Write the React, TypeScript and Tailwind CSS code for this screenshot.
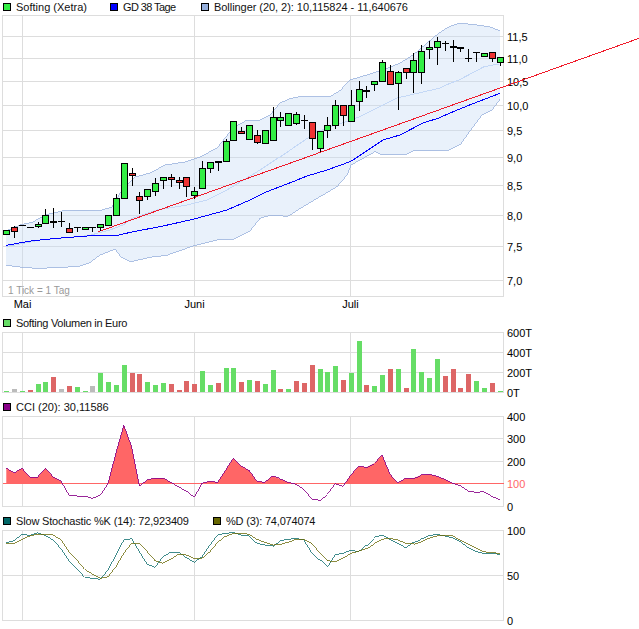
import React from "react";

// one entry per trading day: body top, body bottom, wick top, wick bottom, kind
// g = green, r = red, f = thin doji, k = thick doji
type Candle = [number, number, number, number, string];

const candles: Candle[] = [
  [230, 233.5, 229.5, 233.5, "g"], [226.5, 230.5, 226, 237.7, "r"], [225.5, 225.5, 225.5, 225.5, "f"], [227.5, 227.5, 227.5, 227.5, "f"],
  [223.5, 225.7, 222, 227.7, "g"], [215.3, 223.3, 209.3, 223.3, "g"], [221.7, 221.7, 208.3, 227.7, "k"], [221.3, 221.3, 212, 226.7, "f"],
  [227.7, 231.7, 223.3, 233, "r"], [227.3, 227.3, 227.3, 231.7, "f"], [227.3, 229.7, 227.3, 229.7, "g"], [227.3, 227.3, 227.3, 231.7, "f"],
  [224.3, 227.3, 224.3, 231.3, "g"], [215.3, 225.7, 215.3, 225.7, "g"], [198.3, 215.3, 194, 215.3, "g"], [163.3, 198.3, 163.3, 198.3, "g"],
  [173.3, 175.7, 168.3, 185.7, "r"], [196.3, 200.3, 192.3, 213.7, "r"], [189.3, 196.3, 189.3, 200, "g"], [183.3, 191.3, 178.3, 195.7, "g"],
  [177.3, 180.3, 177.3, 188.7, "g"], [177.3, 179.3, 174, 186.7, "r"], [180.3, 182.3, 177.3, 188.7, "r"], [177.3, 186.3, 177.3, 196.7, "r"],
  [191.3, 195.3, 187.3, 199.3, "g"], [168.3, 188.3, 161, 188.3, "g"], [162.3, 168.3, 162.3, 173.3, "g"], [162.3, 162.3, 161, 170.7, "k"],
  [141.3, 161.7, 139, 161.7, "g"], [121.3, 140.3, 121.3, 140.3, "g"], [131, 132.3, 126.7, 134, "r"], [125.3, 139.3, 125.3, 139.3, "g"],
  [135.3, 142.3, 130, 144, "r"], [130.3, 143.7, 130.3, 143.7, "g"], [117.3, 140.3, 107.3, 140.3, "g"], [117.3, 120.3, 112.3, 126.7, "g"],
  [113.3, 125.3, 113.3, 125.3, "g"], [114.3, 123.3, 112.3, 125.3, "g"], [120.3, 120.3, 115, 129.3, "f"], [122.3, 138.3, 122.3, 150, "r"],
  [131.3, 148.3, 131.3, 152, "g"], [125.3, 130.3, 117.3, 138, "g"], [105.3, 125.3, 100, 129, "g"], [105.3, 115.3, 105.3, 126, "r"],
  [105.3, 121.3, 90, 121.3, "g"], [89.3, 101.3, 81.3, 110.7, "g"], [90.7, 90.7, 86, 98, "k"], [81.3, 84.3, 81.3, 91, "g"],
  [62.3, 81.3, 60.3, 81.3, "g"], [71.3, 84.3, 65.3, 84.3, "r"], [72.3, 83.3, 71.3, 110, "g"], [68.3, 72.3, 68.3, 79.3, "r"],
  [60.3, 72.3, 53.3, 92.7, "g"], [50.7, 71.3, 45, 84, "g"], [47.3, 49.3, 41.3, 59.3, "g"], [41.3, 47.3, 36.7, 64.7, "g"],
  [43.3, 43.3, 40.7, 50.7, "f"], [46.7, 46.7, 40, 62.3, "k"], [48.3, 48.3, 48.3, 51.7, "k"], [58.3, 58.3, 49.3, 62.3, "f"],
  [52.7, 52.7, 52.7, 62.3, "f"], [52.7, 56, 52.7, 56, "g"], [52.3, 58.3, 51.5, 62.3, "r"], [57.3, 62.3, 57.3, 65.7, "g"],
];

const bollUpper = "6,231 20,225 33,222 45,215 63,210.7 80,210 100,210.7 112,207 122,190 135,177 150,173 165,165 185,162 200,157 217,148 233,128 247,120 260,120 270,115 280,103 290,98.7 300,96.7 317,96.7 330,96.7 340,90.7 350,80 383,70 400,63 413,55 427,43 439,33 449,26.7 459,23.3 472,24.3 489,26.7 500,30.7";
const bollLower = "500,99.3 492,110 482,115 472,128.3 460.7,144 449,150 439,150.7 413,151 406.7,154.3 381.7,155 375,151.7 351,165 347,175 337,186.7 320,196.7 303,206.7 288,216.3 270,215.3 260,218.3 250,231 247,232.3 233,239.3 217,240 193,246 166.7,255.3 150,257.3 130.7,261.7 120.7,256.7 115,249 100,255 90,262.7 80,266 60,267.7 35,268.3 20,267 6,265.3";
const bollMiddle = "6,246.7 40,240 88,235.7 110,230 123,225 133,218 156.7,210 186.7,205 206.7,200 227,190 260,170 275,160 283,155 317,131.7 360,116.7 397,98 439,88.3 450,83.3 459,80 484,66.7 499,64";
const gd38 = "6,245.3 33,240.7 56.7,238.3 87,236 118,235.3 133,231.7 160,226.7 193,219.3 227,210 250,200 267,191.7 293,181.7 307,176 327,170 350,161.7 353,160 383,140 400,135 423,123 439,118 450,113 472,104 500,93.3";

// top of each volume bar, read as y offset in the 3x crop (base = 307)
const volumes: [number, string][] = [
  [303, "g"], [297, "n"], [303, "g"], [300, "r"], [282, "g"], [276, "g"], [261, "r"], [297, "n"], [288, "r"], [291, "g"], [303, "g"], [288, "n"],
  [249, "g"], [276, "g"], [285, "g"], [225, "g"], [249, "r"], [252, "r"], [276, "g"], [285, "g"], [279, "g"], [282, "r"], [300, "r"], [273, "r"],
  [282, "r"], [243, "g"], [285, "g"], [279, "r"], [234, "g"], [234, "g"], [276, "r"], [270, "g"], [273, "r"], [282, "g"], [240, "g"], [297, "r"],
  [297, "g"], [273, "r"], [279, "r"], [225, "r"], [237, "g"], [246, "g"], [228, "g"], [270, "r"], [249, "g"], [153, "g"], [285, "r"], [288, "g"],
  [255, "g"], [237, "r"], [237, "g"], [294, "r"], [177, "g"], [246, "g"], [264, "g"], [207, "g"], [258, "r"], [237, "r"], [294, "r"], [252, "r"],
  [273, "g"], [294, "g"], [279, "r"], [303, "g"],
];

const cci = [219, 234, 220, 246, 246, 220, 246, 259, 300, 303, 303, 310, 301, 265, 175, 91, 155, 273, 255, 249, 249, 262, 276, 288, 307, 265, 259, 262, 226, 190, 214, 226, 259, 262, 243, 252, 262, 268, 283, 312, 316, 298, 266, 274, 240, 214, 217, 205, 181, 238, 264, 250, 250, 240, 238, 244, 253, 265, 272, 288, 292, 290, 304, 314];
const stochK = [98, 92, 73, 76, 68, 77, 90, 117, 152, 176, 202, 205, 208, 180, 135, 90, 86, 125, 163, 172, 140, 127, 127, 143, 157, 140, 105, 74, 70, 67, 75, 78, 100, 105, 108, 92, 88, 85, 90, 128, 150, 172, 134, 130, 121, 125, 105, 82, 75, 88, 100, 113, 97, 87, 77, 73, 78, 84, 95, 113, 125, 130, 130, 133];
const stochD = [100, 100, 88, 78, 73, 72, 75, 90, 125, 150, 178, 192, 205, 200, 170, 130, 100, 99, 125, 152, 160, 148, 133, 135, 145, 145, 125, 97, 78, 70, 70, 73, 88, 97, 105, 103, 97, 88, 88, 100, 128, 152, 155, 145, 130, 124, 115, 100, 88, 85, 90, 100, 102, 95, 85, 78, 75, 78, 90, 102, 115, 125, 128, 130];

const xAt = (i: number) => 6.3 + 7.83 * i;
const toPoints = (vals: number[], top: number) =>
  vals.map((v, i) => `${xAt(i).toFixed(1)},${(top + v / 3).toFixed(1)}`).join(" ");

const GRID = "#dddddd";

const Legend = ({
  color,
  width,
  tracking = "",
  children,
}: {
  color: string;
  width?: number;
  tracking?: string;
  children: React.ReactNode;
}) => (
  <div className="flex items-center gap-[5px] shrink-0" style={width ? { width } : undefined}>
    <span className="block w-[8px] h-[8px] border border-black" style={{ background: color }} />
    <span className={`text-[11px] leading-none whitespace-nowrap text-[#111] ${tracking}`}>{children}</span>
  </div>
);

const Frame = ({ top, bottom, hs, vs = [22.5, 194.5, 350.5] }: { top: number; bottom: number; hs: number[]; vs?: number[] }) => (
  <g stroke={GRID} fill="none" shapeRendering="crispEdges">
    {vs.map((x) => (
      <line key={x} x1={x} x2={x} y1={top} y2={bottom} />
    ))}
    {hs.map((y) => (
      <line key={y} x1={2.5} x2={503.5} y1={y} y2={y} />
    ))}
    <rect x={2.5} y={top} width={501} height={bottom - top} />
  </g>
);

const Tick = ({ y, label, color = "#000" }: { y: number; label: string; color?: string }) => (
  <text x={507} y={y + 4} fontSize={11} fill={color}>
    {label}
  </text>
);

const PriceChart = () => {
  const hs = [36.5, 58.5, 81.5, 105.5, 130.5, 157.5, 185.5, 215.5, 246.5, 280.5];
  const labels = ["11,5", "11,0", "10,5", "10,0", "9,5", "9,0", "8,5", "8,0", "7,5", "7,0"];
  return (
    <svg className="block overflow-visible" width={639} height={305} viewBox="0 14 639 305">
      <Frame top={15.5} bottom={296.5} hs={hs} />
      {hs.map((y, i) => (
        <Tick key={y} y={y} label={labels[i]} />
      ))}
      <text x={8} y={294} fontSize={10} fill="#999999">1 Tick = 1 Tag</text>
      <text x={22.5} y={308} fontSize={11} textAnchor="middle">Mai</text>
      <text x={194.5} y={308} fontSize={11} textAnchor="middle">Juni</text>
      <text x={350.5} y={308} fontSize={11} textAnchor="middle">Juli</text>

      <polygon points={`${bollUpper} ${bollLower}`} fill="#c8dcf5" fillOpacity={0.4} />
      <g fill="none" shapeRendering="crispEdges">
        <polyline points={bollUpper} stroke="#94aedb" strokeWidth={0.75} />
        <polyline points={bollLower} stroke="#94aedb" strokeWidth={0.75} />
        <polyline points={bollMiddle} stroke="#c4d8f6" />
        <polyline points={gd38} stroke="#0000ff" />
        <line x1={98.5} y1={231.7} x2={639} y2={38.3} stroke="#f01a2a" />
      </g>

      <g shapeRendering="crispEdges">
        {candles.map(([bt, bb, wt, wb, kind], i) => {
          const x = Math.round(xAt(i)) + 0.5;
          return (
            <g key={i}>
              {wb > wt && <line x1={x} x2={x} y1={wt} y2={wb} stroke="#000" />}
              {kind === "f" && <line x1={x - 3.5} x2={x + 3.5} y1={bt} y2={bt} stroke="#000" />}
              {kind === "k" && <rect x={x - 3.5} y={bt - 1} width={7} height={2} fill="#000" />}
              {(kind === "g" || kind === "r") && (
                <rect
                  x={x - 3}
                  y={Math.round(bt) + 0.5}
                  width={6}
                  height={Math.max(Math.round(bb - bt), 2)}
                  fill={kind === "g" ? "#33ee44" : "#ee3333"}
                  stroke="#000"
                />
              )}
            </g>
          );
        })}
      </g>
    </svg>
  );
};

const VolumeChart = () => (
  <svg className="block overflow-visible" width={639} height={76} viewBox="0 327 639 76">
    <Frame top={332.5} bottom={392.5} hs={[352.5, 372.5]} />
    <Tick y={333} label="600T" />
    <Tick y={353} label="400T" />
    <Tick y={373} label="200T" />
    <Tick y={393} label="0T" />
    <g shapeRendering="crispEdges">
      {volumes.map(([v, kind], i) => {
        const h = (307 - v) / 3;
        const fill = kind === "g" ? "#66dd66" : kind === "r" ? "#dd6666" : "#bbbbbb";
        return <rect key={i} x={Math.round(xAt(i)) - 2} y={392 - h} width={5} height={h} fill={fill} />;
      })}
    </g>
  </svg>
);

const CciChart = () => {
  const line = toPoints(cci, 395);
  const base = 483.5;
  return (
    <svg className="block overflow-visible" width={639} height={106} viewBox="0 411 639 106">
      <defs>
        <clipPath id="cci-above">
          <rect x={0} y={416} width={504} height={base - 416} />
        </clipPath>
      </defs>
      <Frame top={416.5} bottom={506.5} hs={[438.5, 461.5]} />
      <Tick y={417} label="400" />
      <Tick y={439} label="300" />
      <Tick y={462} label="200" />
      <Tick y={484} label="100" color="#ff6666" />
      <Tick y={507} label="0" />
      <polygon
        points={`${xAt(0).toFixed(1)},${base} ${line} ${xAt(63).toFixed(1)},${base}`}
        fill="#ff6666"
        clipPath="url(#cci-above)"
      />
      <g shapeRendering="crispEdges">
        <line x1={2.5} x2={503.5} y1={base} y2={base} stroke="#ff6666" />
        <polyline points={line} fill="none" stroke="#880088" strokeWidth={0.85} />
      </g>
    </svg>
  );
};

const StochChart = () => (
  <svg className="block overflow-visible" width={639} height={104} viewBox="0 525 639 104">
    <Frame top={530.5} bottom={620.5} hs={[575.5]} />
    <Tick y={531} label="100" />
    <Tick y={576} label="50" />
    <Tick y={621} label="0" />
    <g fill="none" shapeRendering="crispEdges">
      <polyline points={toPoints(stochK, 510)} stroke="#006666" strokeWidth={0.75} />
      <polyline points={toPoints(stochD, 510)} stroke="#666600" strokeWidth={0.75} />
    </g>
  </svg>
);

export default function App() {
  return (
    <div className="w-[639px] h-[629px] overflow-hidden bg-white text-black font-['Liberation_Sans',Arial,sans-serif]">
      <div className="flex items-center h-[14px] pl-[3px]">
        <Legend color="#33ee44" width={107}>Softing (Xetra)</Legend>
        <Legend color="#0000ff" width={91} tracking="tracking-[-0.6px]">GD 38 Tage</Legend>
        <Legend color="#94aedb" tracking="tracking-[-0.05px]">Bollinger (20, 2): 10,115824 - 11,640676</Legend>
      </div>
      <PriceChart />
      <div className="flex items-center h-[8px] pl-[3px]">
        <Legend color="#66dd66" tracking="tracking-[-0.3px]">Softing Volumen in Euro</Legend>
      </div>
      <VolumeChart />
      <div className="flex items-center h-[8px] pl-[3px]">
        <Legend color="#880088">CCI (20): 30,11586</Legend>
      </div>
      <CciChart />
      <div className="flex items-center h-[8px] pl-[3px]">
        <Legend color="#006666" width={210} tracking="tracking-[-0.17px]">Slow Stochastic %K (14): 72,923409</Legend>
        <Legend color="#666600" tracking="tracking-[-0.18px]">%D (3): 74,074074</Legend>
      </div>
      <StochChart />
    </div>
  );
}
